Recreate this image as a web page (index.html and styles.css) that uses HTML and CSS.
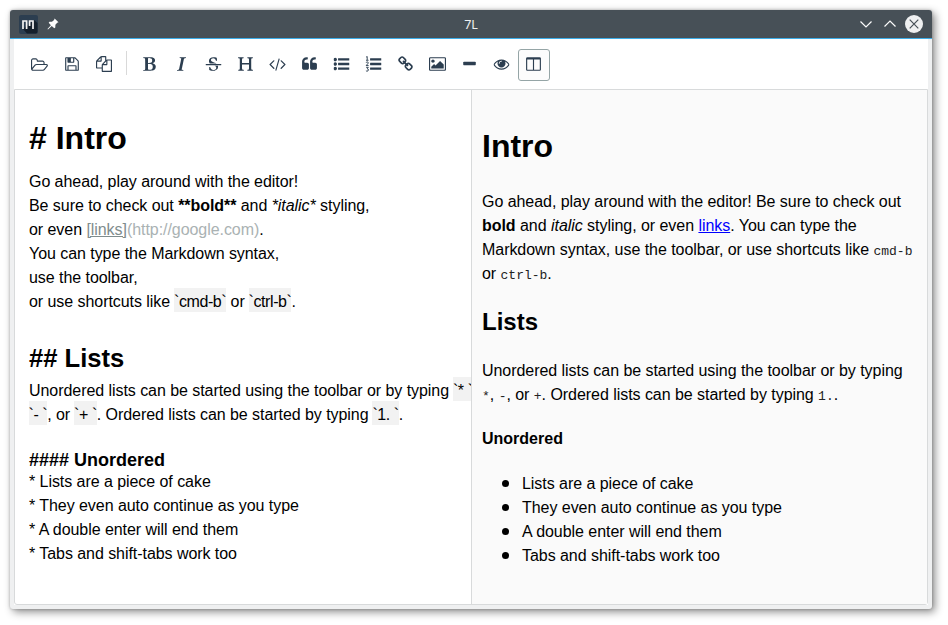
FILE: index.html
```html
<!DOCTYPE html>
<html lang="en">
<head>
<meta charset="utf-8">
<title>7L</title>
<link rel="stylesheet" href="styles.css">
</head>
<body>
<div class="window">
  <header class="titlebar">
    <div class="title-left">
      <svg class="app-icon" viewBox="0 0 19 19"><rect width="19" height="19" rx="2" fill="#2c3e50"/><path d="M4 14L8 18.500H17a2 2 0 0 0 1.500-2V8L15 5z" fill="#15202c"/><path d="M4 14V6H7.600V14M7.600 9V6M11 6H14V14M10.600 5.200V11" fill="none" stroke="#f4f4f4" stroke-width="1.700"/></svg>
      <svg class="pin" viewBox="0 0 12 12"><path d="M7.600.5L11.500 4.300 10.200 4.800 8.400 6.800 8.300 9.400 7.300 10.200 4.700 7.900 1 11.500.5 11 3.900 7.200 1.700 4.800 2.500 3.800 5 3.700 7.100 1.900z" fill="#fcfcfc"/></svg>
    </div>
    <div class="title">7L</div>
    <div class="title-right">
      <svg class="ctl" viewBox="0 0 18 18"><path d="M3.500 6.500L9 12l5.500-5.500" fill="none" stroke="#fcfcfc" stroke-width="1.200"/></svg>
      <svg class="ctl" viewBox="0 0 18 18"><path d="M3.500 11.500L9 6l5.500 5.500" fill="none" stroke="#fcfcfc" stroke-width="1.200"/></svg>
      <svg class="ctl" viewBox="0 0 18 18"><circle cx="9" cy="9" r="9" fill="#eff0f1"/><path d="M4.700 4.700l8.600 8.600M13.300 4.700l-8.600 8.600" stroke="#475057" stroke-width="1.200"/></svg>
    </div>
  </header>
  <div class="client">
    <nav class="toolbar">
      <a class="btn"><svg class="wide" viewBox="0 0 1920 1792"><path d="M1781 1055q0-35-53-35h-1088q-40 0-85.500 21.500t-71.500 52.500l-294 363q-18 24-18 40 0 35 53 35h1088q40 0 86-22t71-53l294-363q18-22 18-39zm-1141-163h768v-160q0-40-28-68t-68-28h-576q-40 0-68-28t-28-68v-64q0-40-28-68t-68-28h-320q-40 0-68 28t-28 68v853l256-315q44-53 116-87.500t140-34.500zm1269 163q0 62-46 120l-295 363q-43 53-116 87.500t-140 34.500h-1088q-92 0-158-66t-66-158v-960q0-92 66-158t158-66h320q92 0 158 66t66 158v32h544q92 0 158 66t66 158v160h192q54 0 99 24.500t67 70.500q15 32 15 68z"/></svg></a>
      <a class="btn"><svg viewBox="0 0 1792 1792"><path d="M512 1536h768v-384h-768v384zm896 0h128v-896q0-14-10-38.500t-20-34.500l-281-281q-10-10-34-20t-39-10v416q0 40-28 68t-68 28h-576q-40 0-68-28t-28-68v-416h-128v1280h128v-416q0-40 28-68t68-28h832q40 0 68 28t28 68v416zm-384-928v-320q0-13-9.500-22.500t-22.500-9.500h-192q-13 0-22.500 9.500t-9.500 22.500v320q0 13 9.500 22.500t22.500 9.500h192q13 0 22.500-9.500t9.500-22.500zm640 32v928q0 40-28 68t-68 28h-1344q-40 0-68-28t-28-68v-1344q0-40 28-68t68-28h928q40 0 88 20t76 48l280 280q28 28 48 76t20 88z"/></svg></a>
      <a class="btn"><svg viewBox="0 0 1792 1792"><path d="M1696 384q40 0 68 28t28 68v1216q0 40-28 68t-68 28h-960q-40 0-68-28t-28-68v-288h-544q-40 0-68-28t-28-68v-672q0-40 20-88t48-76l408-408q28-28 76-48t88-20h416q40 0 68 28t28 68v328q68-40 128-40h416zm-544 213l-299 299h299v-299zm-640-384l-299 299h299v-299zm196 647l316-316v-416h-384v416q0 40-28 68t-68 28h-416v640h512v-256q0-40 20-88t48-76zm956 804v-1152h-384v416q0 40-28 68t-68 28h-416v640h896z"/></svg></a>
      <i class="separator"></i>
      <a class="btn"><svg viewBox="0 0 1792 1792"><path d="M747 1521q74 32 140 32 376 0 376-335 0-114-41-180-27-44-61.500-74t-67.500-46.500-80.500-25-84-10.500-94.500-2q-73 0-101 10 0 53-.5 159t-.5 158q0 8-1 67.500t-.5 96.500 4.500 83.500 12 66.500zm-14-746q42 7 109 7 82 0 143-13t110-44.500 74.500-89.500 25.500-142q0-70-29-122.500t-79-82-108-43.500-124-14q-50 0-130 13 0 50 4 151t4 152q0 27-.5 80t-.5 79q0 46 1 69zm-541 889l2-94q15-4 85-16t106-27q7-12 12.500-27t8.500-33.500 5.500-32.500 3-37.500.5-34v-65.500q0-982-22-1025-4-8-22-14.500t-44.500-11-49.500-7-48.500-4.500-30.500-3l-4-83q98-2 340-11.500t373-9.500q23 0 68.500.5t67.500.5q70 0 136.500 13t128.500 42 108 71 74 104.500 28 137.500q0 52-16.500 95.500t-39 72-64.500 57.500-73 45-84 40q154 35 256.500 134t102.500 248q0 100-35 179.500t-93.500 130.500-138 85.500-163.500 48.500-176 14q-44 0-132-3t-132-3q-106 0-307 11t-231 12z"/></svg></a>
      <a class="btn"><svg viewBox="0 0 1792 1792"><path d="M384 1662l17-85q6-2 81.500-21.500t111.500-37.500q28-35 41-101 1-7 62-289t114-543.500 52-296.500v-25q-24-13-54.500-18.500t-69.500-8-58-5.500l19-103q33 2 120 6.500t149.500 7 120.500 2.500q48 0 98.500-2.500t121-7 98.500-6.500q-5 39-19 89-30 10-101.500 28.500t-108.500 33.500q-8 19-14 42.500t-9 40-7.500 45.500-6.500 42q-27 148-87.500 419.500t-77.500 355.500q-2 9-13 58t-20 90-16 83.500-6 57.500l1 18q17 4 185 31-3 44-16 99-11 0-32.500 1.500t-32.500 1.500q-29 0-87-10t-86-10q-138-2-206-2-51 0-143 9t-121 11z"/></svg></a>
      <a class="btn"><svg viewBox="0 0 1792 1792"><path d="M1760 896q14 0 23 9t9 23v64q0 14-9 23t-23 9h-1728q-14 0-23-9t-9-23v-64q0-14 9-23t23-9h1728zm-1277-64q-28-35-51-80-48-97-48-188 0-181 134-309 133-127 393-127 50 0 167 19 66 12 177 48 10 38 21 118 14 123 14 183 0 18-5 45l-12 3-84-6-14-2q-50-149-103-205-88-91-210-91-114 0-182 59-67 58-67 146 0 73 66 140t279 129q69 20 173 66 58 28 95 52h-743zm507 256h411q7 39 7 92 0 111-41 212-23 55-71 104-37 35-109 81-80 48-153 66-80 21-203 21-114 0-195-23l-140-40q-57-16-72-28-8-8-8-22v-13q0-108-2-156-1-30 0-68l2-37v-44l102-2q15 34 30 71t22.500 56 12.500 27q35 57 80 94 43 36 105 57 59 22 132 22 64 0 139-27 77-26 122-86 47-61 47-129 0-84-81-157-34-29-137-71z"/></svg></a>
      <a class="btn"><svg viewBox="0 0 1792 1792"><path d="M1682 1664q-44 0-132.500-3.500t-133.500-3.500q-44 0-132 3.500t-132 3.500q-24 0-37-20.500t-13-45.500q0-31 17-46t39-17 51-7 45-15q33-21 33-140l-1-391q0-21-1-31-13-4-50-4h-675q-38 0-51 4-1 10-1 31l-1 371q0 142 37 164 16 10 48 13t57 3.500 45 15 20 45.500q0 26-12.500 48t-36.500 22q-47 0-139.500-3.500t-138.500-3.500q-43 0-128 3.500t-127 3.500q-23 0-35.500-21t-12.500-45q0-30 15.500-45t36-17.500 47.500-7.500 42-15q33-23 33-143l-1-57v-813q0-3 .5-26t0-36.500-1.500-38.500-3.500-42-6.500-36.500-11-31.500-16-18q-15-10-45-12t-53-2-41-14-18-45q0-26 12-48t36-22q46 0 138.500 3.500t138.500 3.500q42 0 126.500-3.500t126.500-3.500q25 0 37.500 22t12.500 48q0 30-17 43.500t-38.500 14.500-49.500 4-43 13q-35 21-35 160l1 320q0 21 1 32 13 3 39 3h699q25 0 38-3 1-11 1-32l1-320q0-139-35-160-18-11-58.500-12.500t-66-13-25.500-49.500q0-26 12.500-48t37.500-22q44 0 132 3.500t132 3.500q43 0 129-3.500t129-3.500q25 0 37.500 22t12.500 48q0 30-17.500 44t-40 14.500-51.500 3-44 12.500q-35 23-35 161l1 943q0 119 34 140 16 10 46 13.500t53.500 4.500 41.500 15.500 18 44.500q0 26-12 48t-36 22z"/></svg></a>
      <a class="btn"><svg class="wide" viewBox="-64 0 1920 1792"><path d="M553 1399l-50 50q-10 10-23 10t-23-10l-466-466q-10-10-10-23t10-23l466-466q10-10 23-10t23 10l50 50q10 10 10 23t-10 23l-393 393 393 393q10 10 10 23t-10 23zm591-1067l-373 1291q-4 13-15.500 19.500t-23.500 2.500l-62-17q-13-4-19.500-15.500t-2.500-24.500l373-1291q4-13 15.500-19.500t23.500-2.500l62 17q13 4 19.500 15.500t2.500 24.500zm657 651l-466 466q-10 10-23 10t-23-10l-50-50q-10-10-10-23t10-23l393-393-393-393q-10-10-10-23t10-23l50-50q10-10 23-10t23 10l466 466q10 10 10 23t-10 23z"/></svg></a>
      <a class="btn"><svg viewBox="0 0 1792 1792"><path d="M832 960v384q0 80-56 136t-136 56h-384q-80 0-136-56t-56-136v-704q0-104 40.500-198.500t109.500-163.500 163.500-109.500 198.500-40.500h64q26 0 45 19t19 45v128q0 26-19 45t-45 19h-64q-106 0-181 75t-75 181v32q0 40 28 68t68 28h224q80 0 136 56t56 136zm896 0v384q0 80-56 136t-136 56h-384q-80 0-136-56t-56-136v-704q0-104 40.500-198.500t109.500-163.500 163.500-109.500 198.500-40.500h64q26 0 45 19t19 45v128q0 26-19 45t-45 19h-64q-106 0-181 75t-75 181v32q0 40 28 68t68 28h224q80 0 136 56t56 136z"/></svg></a>
      <a class="btn"><svg viewBox="0 0 1792 1792"><path d="M384 1408q0 80-56 136t-136 56-136-56-56-136 56-136 136-56 136 56 56 136zm0-512q0 80-56 136t-136 56-136-56-56-136 56-136 136-56 136 56 56 136zm1408 416v192q0 13-9.500 22.500t-22.500 9.500h-1216q-13 0-22.500-9.500t-9.500-22.500v-192q0-13 9.500-22.500t22.500-9.500h1216q13 0 22.500 9.500t9.500 22.500zm-1408-928q0 80-56 136t-136 56-136-56-56-136 56-136 136-56 136 56 56 136zm1408 416v192q0 13-9.500 22.500t-22.500 9.500h-1216q-13 0-22.500-9.500t-9.500-22.500v-192q0-13 9.500-22.500t22.500-9.500h1216q13 0 22.500 9.500t9.500 22.500zm0-512v192q0 13-9.500 22.500t-22.500 9.500h-1216q-13 0-22.500-9.500t-9.500-22.500v-192q0-13 9.500-22.500t22.500-9.500h1216q13 0 22.500 9.500t9.500 22.500z"/></svg></a>
      <a class="btn"><svg viewBox="0 0 1792 1792"><path d="M512 1312q0-32 32-32h1216q32 0 32 32v192q0 32-32 32h-1216q-32 0-32-32zM512 800q0-32 32-32h1216q32 0 32 32v192q0 32-32 32h-1216q-32 0-32-32zM512 288q0-32 32-32h1216q32 0 32 32v192q0 32-32 32h-1216q-32 0-32-32z"/><path class="digits" d="M70 130L190 50V450M60 480H340M50 760Q80 660 200 660 320 670 310 780 300 850 60 1070H350M70 1270H310L190 1430Q330 1430 330 1550 310 1700 180 1700 90 1700 40 1640"/></svg></a>
      <a class="btn"><svg viewBox="0 0 1792 1792"><path d="M1520 1216q0-40-28-68l-208-208q-28-28-68-28-42 0-72 32 3 3 19 18.500t21.500 21.500 15 19 13 25.500 3.500 27.500q0 40-28 68t-68 28q-15 0-27.500-3.500t-25.500-13-19-15-21.500-21.500-18.500-19q-33 31-33 73 0 40 28 68l206 207q27 27 68 27 40 0 68-26l147-146q28-28 28-67zm-703-705q0-40-28-68l-206-207q-28-28-68-28-39 0-68 27l-147 146q-28 28-28 67 0 40 28 68l208 208q27 27 68 27 42 0 72-31-3-3-19-18.500t-21.500-21.500-15-19-13-25.500-3.500-27.500q0-40 28-68t68-28q15 0 27.500 3.500t25.500 13 19 15 21.500 21.500 18.500 19q33-31 33-73zm895 705q0 120-85 203l-147 146q-83 83-203 83-121 0-204-85l-206-207q-83-83-83-203 0-123 88-209l-88-88q-86 88-208 88-120 0-204-84l-208-208q-84-84-84-204t85-203l147-146q83-83 203-83 121 0 204 85l206 207q83 83 83 203 0 123-88 209l88 88q86-88 208-88 120 0 204 84l208 208q84 84 84 204z"/></svg></a>
      <a class="btn"><svg class="wide" viewBox="0 0 1920 1792"><path d="M640 576q0 80-56 136t-136 56-136-56-56-136 56-136 136-56 136 56 56 136zm1024 384v448h-1408v-192l320-320 160 160 512-512zm96-704h-1600q-13 0-22.500 9.500t-9.500 22.500v1216q0 13 9.500 22.500t22.500 9.500h1600q13 0 22.500-9.500t9.500-22.500v-1216q0-13-9.500-22.500t-22.500-9.500zm160 32v1216q0 66-47 113t-113 47h-1600q-66 0-113-47t-47-113v-1216q0-66 47-113t113-47h1600q66 0 113 47t47 113z"/></svg></a>
      <a class="btn"><svg viewBox="0 0 1792 1792"><path d="M1600 736v192q0 40-28 68t-68 28h-1216q-40 0-68-28t-28-68v-192q0-40 28-68t68-28h1216q40 0 68 28t28 68z"/></svg></a>
      <a class="btn"><svg viewBox="0 0 1792 1792"><path d="M1664 960q-152-236-381-353 61 104 61 225 0 185-131.500 316.500t-316.500 131.500-316.500-131.500-131.500-316.500q0-121 61-225-229 117-381 353 133 205 333.500 326.500t434.500 121.500 434.500-121.500 333.500-326.500zm-720-384q0-20-14-34t-34-14q-125 0-214.500 89.500t-89.500 214.500q0 20 14 34t34 14 34-14 14-34q0-86 61-147t147-61q20 0 34-14t14-34zm848 384q0 34-20 69-140 230-376.500 368.500t-499.500 138.500-499.500-139-376.500-368q-20-35-20-69t20-69q140-229 376.500-368t499.500-139 499.500 139 376.500 368q20 35 20 69z"/></svg></a>
      <a class="btn active"><svg viewBox="0 0 1792 1792"><path d="M224 1536h608v-1152h-640v1120q0 13 9.500 22.500t22.500 9.500zm1376-32v-1120h-640v1152h608q13 0 22.500-9.500t9.500-22.500zm128-1216v1216q0 66-47 113t-113 47h-1344q-66 0-113-47t-47-113v-1216q0-66 47-113t113-47h1344q66 0 113 47t47 113z"/></svg></a>
    </nav>
    <main class="panes">
      <section class="source">
        <div class="line s1"># Intro</div>
        <div class="line">Go ahead, play around with the editor!</div>
        <div class="line">Be sure to check out <b>**bold**</b> and <em>*italic*</em> styling,</div>
        <div class="line">or even <span class="link">[links]</span><span class="url">(http://google.com)</span>.</div>
        <div class="line">You can type the Markdown syntax,</div>
        <div class="line">use the toolbar,</div>
        <div class="line">or use shortcuts like <span class="code">`cmd-b`</span> or <span class="code">`ctrl-b`</span>.</div>
        <div class="line"></div>
        <div class="line s2">## Lists</div>
        <div class="line">Unordered lists can be started using the toolbar or by typing <span class="code">`* `</span></div>
        <div class="line"><span class="code">`- `</span>, or <span class="code">`+ `</span>. Ordered lists can be started by typing <span class="code">`1. `</span>.</div>
        <div class="line"></div>
        <div class="line s4">#### Unordered</div>
        <div class="line">* Lists are a piece of cake</div>
        <div class="line">* They even auto continue as you type</div>
        <div class="line">* A double enter will end them</div>
        <div class="line">* Tabs and shift-tabs work too</div>
      </section>
      <section class="preview">
        <h1>Intro</h1>
        <p>Go ahead, play around with the editor! Be sure to check out <strong>bold</strong> and <em>italic</em> styling, or even <a class="anchor">links</a>. You can type the Markdown syntax, use the toolbar, or use shortcuts like <code>cmd-b</code> or <code>ctrl-b</code>.</p>
        <h2>Lists</h2>
        <p>Unordered lists can be started using the toolbar or by typing <code>*</code>, <code>-</code>, or <code>+</code>. Ordered lists can be started by typing <code>1.</code>.</p>
        <h4>Unordered</h4>
        <ul>
          <li>Lists are a piece of cake</li>
          <li>They even auto continue as you type</li>
          <li>A double enter will end them</li>
          <li>Tabs and shift-tabs work too</li>
        </ul>
      </section>
    </main>
  </div>
</div>
</body>
</html>
```
FILE: styles.css
```css
* { box-sizing: border-box; }

body {
  margin: 0;
  padding: 10px 16px 16px 10px;
  height: 625px;
  overflow: hidden;
  background: #fff;
  font: 16px/24px "Liberation Sans", sans-serif;
  color: #000;
}

.window {
  width: 922px;
  height: 599px;
  display: flex;
  flex-direction: column;
  background: #eff0f1;
  border-radius: 3px;
  box-shadow: 3px 3px 8px rgba(0, 0, 0, .45), 0 0 3px rgba(0, 0, 0, .25);
}

.titlebar {
  height: 29px;
  flex: none;
  display: grid;
  grid-template-columns: 1fr auto 1fr;
  align-items: center;
  padding: 0 9px;
  background: #475057;
  border-bottom: 1px solid #3daee9;
  border-radius: 3px 3px 0 0;
}

.title-left, .title-right { display: flex; align-items: center; }
.title-left { gap: 9px; }
.title-right { justify-content: flex-end; gap: 6px; }
.title { padding-top: 1px; font: 12.5px/27px "Noto Sans", sans-serif; color: #eff0f1; }
.app-icon { width: 19px; height: 19px; }
.pin { width: 12px; height: 12px; }
.ctl { width: 18px; height: 18px; }

.client {
  flex: 1;
  min-height: 0;
  display: flex;
  flex-direction: column;
  margin: 0 4px 4px;
  background: #fff;
}

.toolbar {
  height: 50px;
  flex: none;
  display: flex;
  align-items: flex-start;
  padding: 10px 10px 0;
}

.btn {
  width: 32px;
  height: 32px;
  display: flex;
  align-items: center;
  justify-content: center;
  padding: 0 1px 2px 0;
  border: 1px solid transparent;
  border-radius: 3px;
}

.btn svg { width: 16px; height: 16px; flex: none; fill: #2c3e50; }
.btn svg.wide { width: 17px; }
.separator ~ .btn svg:not(.wide) { transform: translateX(-.5px); }
.btn .digits { fill: none; stroke: #2c3e50; stroke-width: 105; }
.btn.active { background: #fcfcfc; border-color: #95a5a6; }

.separator {
  width: 1px;
  height: 24px;
  margin: 2px 7px 0 6px;
  background: #d9d9d9;
}

.panes {
  flex: 1;
  min-height: 0;
  display: grid;
  grid-template-columns: 456px 1fr;
  border: 1px solid #d8dadb;
  border-radius: 0 0 3px 3px;
}

.source { padding: 14px 0 0 14px; overflow: hidden; letter-spacing: -.055px; }
.line { height: 24px; line-height: 28px; white-space: pre; }
.s1 { height: 64px; font: bold 32px/68px "Liberation Sans", sans-serif; letter-spacing: 0; }
.s2 { height: 41px; font: bold 25.6px/45px "Liberation Sans", sans-serif; letter-spacing: 0; }
.s4 { height: 19px; font: bold 18px/22px "Liberation Sans", sans-serif; letter-spacing: 0; }
.code {
  background: linear-gradient(#f2f2f2, #f2f2f2) 0 0 / 100% 24px no-repeat;
  padding: 5px 0 3px;
  margin-left: -.5px;
  letter-spacing: -.42px;
}
.link { color: #7f8c8d; text-decoration: underline; }
.url { color: #aab2b3; }

.preview {
  padding: 13px 10px 0;
  background: #fafafa;
  border-left: 1px solid #d8dadb;
  overflow: hidden;
  letter-spacing: -.045px;
}

.preview > :first-child { margin-top: 21px; }
h1 { margin: 21px 0; font-size: 32px; line-height: 45px; letter-spacing: 0; }
h2 { margin: 20px 0 19px; font-size: 24px; line-height: 33px; letter-spacing: 0; }
h4 { margin: 20px 0 22px; font-size: 16px; line-height: 23px; letter-spacing: 0; }
p { margin: 0; }
p + h2 { margin: 19px 0 21px; }
ul { margin: 0; padding-left: 40px; list-style: none; }
li::before {
  content: "";
  display: inline-block;
  width: 7px;
  height: 7px;
  margin: 0 13px 0 -20px;
  border-radius: 50%;
  background: #000;
  vertical-align: 2px;
}
code { font: 13px/1 "Liberation Mono", monospace; letter-spacing: 0; color: #222; }
.anchor { color: #00f; text-decoration: underline; }
```
